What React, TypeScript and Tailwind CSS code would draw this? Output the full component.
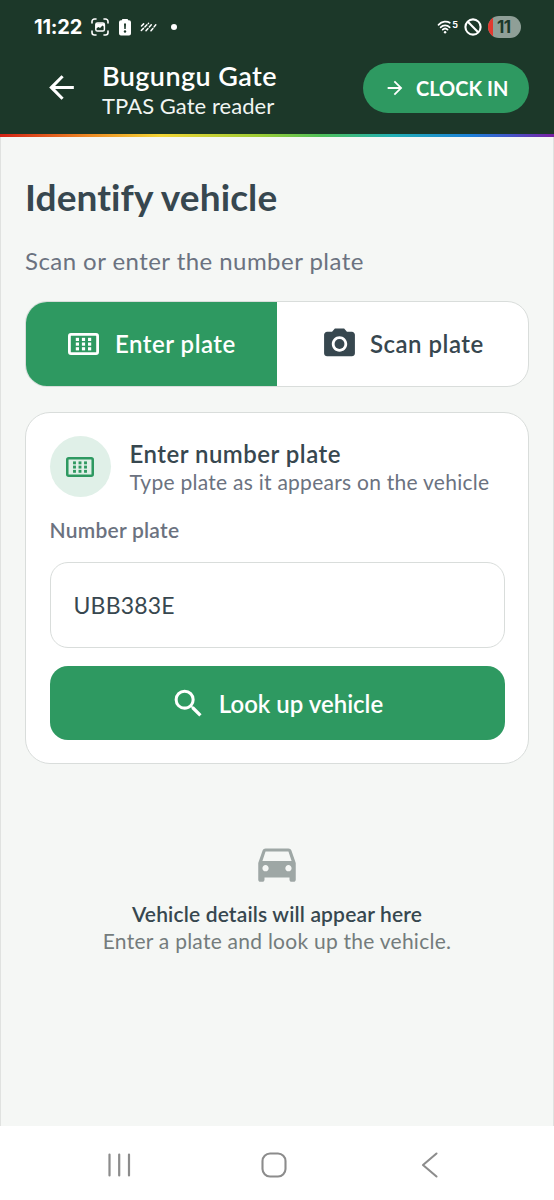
import React from "react";
import {
    MdArrowBack,
    MdArrowForward,
    MdCameraAlt,
    MdDirectionsCar,
    MdSearch,
} from "react-icons/md";

const KeypadIcon = ({ className }: { className?: string }) => (
    <svg viewBox="0 0 31 22" className={className} fill="none">
        <rect
            x="1.4"
            y="1.4"
            width="28.2"
            height="19.2"
            rx="1.6"
            stroke="currentColor"
            strokeWidth="2.8"
        />
        {[7.8, 13.9, 20].map((x) =>
            [4.8, 9.5, 14.2].map((y) => (
                <rect
                    key={`${x}-${y}`}
                    x={x}
                    y={y}
                    width="3.2"
                    height="3.2"
                    fill="currentColor"
                />
            ))
        )}
    </svg>
);

const StatusBar = () => {
    return (
        <div className="flex h-[54px] items-center pl-[34px] pr-[33px]">
            <span className="w-[57px] whitespace-nowrap font-['Inter',sans-serif] text-[20px] font-bold leading-6 tracking-[-0.2px]">
                11:22
            </span>
            <svg width="18" height="18" viewBox="0 0 18 18" fill="none">
                <path
                    d="M1 5V3.5A2.5 2.5 0 0 1 3.5 1H5M13 1h1.5A2.5 2.5 0 0 1 17 3.5V5M17 13v1.5a2.5 2.5 0 0 1-2.5 2.5H13M5 17H3.5A2.5 2.5 0 0 1 1 14.5V13"
                    stroke="white"
                    strokeWidth="1.6"
                    strokeLinecap="round"
                />
                <rect x="4.8" y="5" width="8.6" height="8" rx="1.6" stroke="white" strokeWidth="1.5" />
                <path d="M5 10.5l2.5-1.5 1.5 1 2.5-2.5 2 1.5v-3.5H5z" fill="white" />
            </svg>
            <svg width="12" height="17" viewBox="0 0 12 17" className="ml-[10px]">
                <path
                    d="M4 0h4a1 1 0 0 1 1 1.2H10a2 2 0 0 1 2 2V14.5a2 2 0 0 1-2 2H2a2 2 0 0 1-2-2V3.2a2 2 0 0 1 2-2h1A1 1 0 0 1 4 0z"
                    fill="white"
                />
                <path d="M5 4.5h2l-.3 5.5H5.3z" fill="#1c3829" />
                <circle cx="6" cy="12.5" r="1.2" fill="#1c3829" />
            </svg>
            <svg
                width="17"
                height="10"
                viewBox="0 0 17 10"
                className="ml-[9px]"
                stroke="white"
                strokeWidth="1.5"
                strokeLinecap="round"
            >
                <path d="M1.5 4L4 1.5M1.3 8.5L8.5 1.3M6 8.8L12.2 1.8M11 8.8L15.8 2.8" strokeDasharray="3 2" />
            </svg>
            <span className="ml-[14px] h-1.5 w-1.5 rounded-full bg-white" />

            <div className="ml-auto flex items-center">
                <div className="flex">
                    <svg
                        width="16"
                        height="14"
                        viewBox="0 0 16 14"
                        fill="none"
                        stroke="white"
                        strokeWidth="1.7"
                        strokeLinecap="round"
                    >
                        <path d="M1.5 4.8C5 1 10 0.8 12.8 2.8M3.6 7.3C6 4.8 10.3 4.8 12.7 7.3M5.7 9.7c1.4-1.4 3.5-1.4 4.9 0" />
                        <circle cx="8.1" cy="12.2" r="1.2" fill="white" stroke="none" />
                    </svg>
                    <span className="-ml-[1px] font-['Inter',sans-serif] text-[9px] font-bold leading-[9px]">
                        5
                    </span>
                </div>
                <svg
                    width="18"
                    height="18"
                    viewBox="0 0 18 18"
                    className="ml-[6px]"
                    fill="none"
                    stroke="white"
                    strokeWidth="2.1"
                >
                    <circle cx="9" cy="9" r="7.6" />
                    <path d="M3.6 3.6l10.8 10.8" />
                </svg>
                <div className="ml-[6px] flex h-[22px] w-[33px] items-center overflow-hidden rounded-full bg-[#8f9f97]">
                    <span className="h-full w-[5px] bg-[#e2392f]" />
                    <span className="flex-1 pl-[4px] font-['Inter',sans-serif] text-[17px] font-bold leading-5 tracking-[-0.5px] text-[#1c3829]">
                        11
                    </span>
                </div>
            </div>
        </div>
    );
};

const Header = () => {
    return (
        <header className="bg-[#1c3829] text-white">
            <StatusBar />
            <div className="flex h-[80px] items-start pl-[43px] pr-[25px]">
                <MdArrowBack className="mt-[15px] h-[37px] w-[37px]" />
                <div className="ml-[22px] flex flex-col whitespace-nowrap pt-[6px]">
                    <h1 className="text-[27px] font-semibold leading-8 tracking-[0.4px]">
                        Bugungu Gate
                    </h1>
                    <p className="text-[22px] leading-7 tracking-[0.05px] text-[#f1f5f2]">
                        TPAS Gate reader
                    </p>
                </div>
                <button className="ml-auto mt-[9px] flex h-[50px] w-[166px] items-center whitespace-nowrap rounded-full bg-[#2e9961] pl-[21px] text-[20px] font-bold">
                    <MdArrowForward className="mr-[10px] h-[22px] w-[22px]" />
                    CLOCK IN
                </button>
            </div>
            <div className="h-[3px] bg-[linear-gradient(90deg,#d32216_0%,#ee8a25_16%,#f3d535_29%,#9ccc35_47%,#4fc05a_58%,#22b0b5_71%,#1c80d8_85%,#4355c8_92%,#7b1fa2_100%)]" />
        </header>
    );
};

const PlateTabs = () => {
    return (
        <div className="mt-6 flex h-[86px] overflow-hidden rounded-[22px] border border-[#d9dddb] bg-white text-[24px] font-semibold">
            <button className="flex w-[251px] items-center whitespace-nowrap bg-[#2e9961] pl-[42px] tracking-[0.5px] text-white">
                <KeypadIcon className="mr-[16px] h-[22px] w-[31px]" />
                Enter plate
            </button>
            <button className="flex flex-1 items-center whitespace-nowrap pl-[44px] tracking-[0.5px]">
                <MdCameraAlt className="mr-[12px] h-[38px] w-[37px]" />
                Scan plate
            </button>
        </div>
    );
};

const PlateCard = () => {
    return (
        <section className="mt-[25px] flex flex-col rounded-[25px] border border-[#d9dddb] bg-white px-[23.5px] pb-[23px] pt-[23px]">
            <div className="flex items-center whitespace-nowrap">
                <div className="mr-[19px] flex h-[61px] w-[61px] items-center justify-center rounded-full bg-[#e0f0e8]">
                    <KeypadIcon className="h-5 w-[28px] text-[#2e9961]" />
                </div>
                <div className="pt-px">
                    <h3 className="text-[24px] font-semibold leading-[30px] tracking-[0.48px]">
                        Enter number plate
                    </h3>
                    <p className="text-[21px] leading-[26px] tracking-[0.26px] text-[#6b7280]">
                        Type plate as it appears on the vehicle
                    </p>
                </div>
            </div>
            <label
                htmlFor="plate"
                className="mt-5 text-[21px] font-semibold leading-[26px] tracking-[0.25px] text-[#6b7280]"
            >
                Number plate
            </label>
            <input
                id="plate"
                defaultValue="UBB383E"
                className="mt-[19px] h-[86px] rounded-[18px] border border-[#d9dddb] bg-white px-[23px] text-[23px] tracking-[0.2px] outline-none"
            />
            <button className="mt-[18px] flex h-[74px] items-center justify-center whitespace-nowrap rounded-[18px] bg-[#2e9961] pr-[1px] text-[24px] font-semibold text-white">
                <MdSearch className="mr-[12px] h-[37px] w-[37px]" />
                <span className="pt-px">Look up vehicle</span>
            </button>
        </section>
    );
};

const EmptyState = () => {
    return (
        <div className="mt-[74px] flex flex-col items-center whitespace-nowrap text-[21px] leading-[27px]">
            <MdDirectionsCar className="mb-[12px] h-[50px] w-[50px] text-[#9ea7a5]" />
            <p className="font-semibold tracking-[0.16px]">
                Vehicle details will appear here
            </p>
            <p className="tracking-[0.25px] text-[#747c7c]">
                Enter a plate and look up the vehicle.
            </p>
        </div>
    );
};

const NavBar = () => {
    return (
        <nav className="flex h-[74px] items-center bg-white pl-[107px] pt-[4px] text-[#8c8c8c]">
            <svg width="24" height="26" viewBox="0 0 24 26" stroke="currentColor" strokeWidth="2.2" strokeLinecap="round">
                <path d="M2.5 2.5v21M12.2 2.5v21M22 2.5v21" />
            </svg>
            <svg width="26" height="26" viewBox="0 0 26 26" fill="none" className="ml-[130px]">
                <rect x="1.5" y="1.5" width="23" height="23" rx="7.5" stroke="currentColor" strokeWidth="2.1" />
            </svg>
            <svg
                width="18"
                height="26"
                viewBox="0 0 18 26"
                fill="none"
                className="ml-[134px]"
                stroke="currentColor"
                strokeWidth="2.1"
                strokeLinecap="round"
                strokeLinejoin="round"
            >
                <path d="M15.5 1.5L2 13l13.5 11.5" />
            </svg>
        </nav>
    );
};

export default function App() {
    return (
        <div className="flex h-[1200px] w-[554px] flex-col bg-[#f5f7f5] font-['Lato',sans-serif] text-[#37474f]">
            <Header />
            <main className="flex-1 border-x border-[#e0e2e0] px-6 pt-[38px]">
                <h2 className="whitespace-nowrap text-[37px] font-bold leading-[44px] tracking-[0.1px]">
                    Identify vehicle
                </h2>
                <p className="mt-[26px] whitespace-nowrap text-[24px] leading-8 tracking-[0.45px] text-[#6b7280]">
                    Scan or enter the number plate
                </p>
                <PlateTabs />
                <PlateCard />
                <EmptyState />
            </main>
            <NavBar />
        </div>
    );
}
